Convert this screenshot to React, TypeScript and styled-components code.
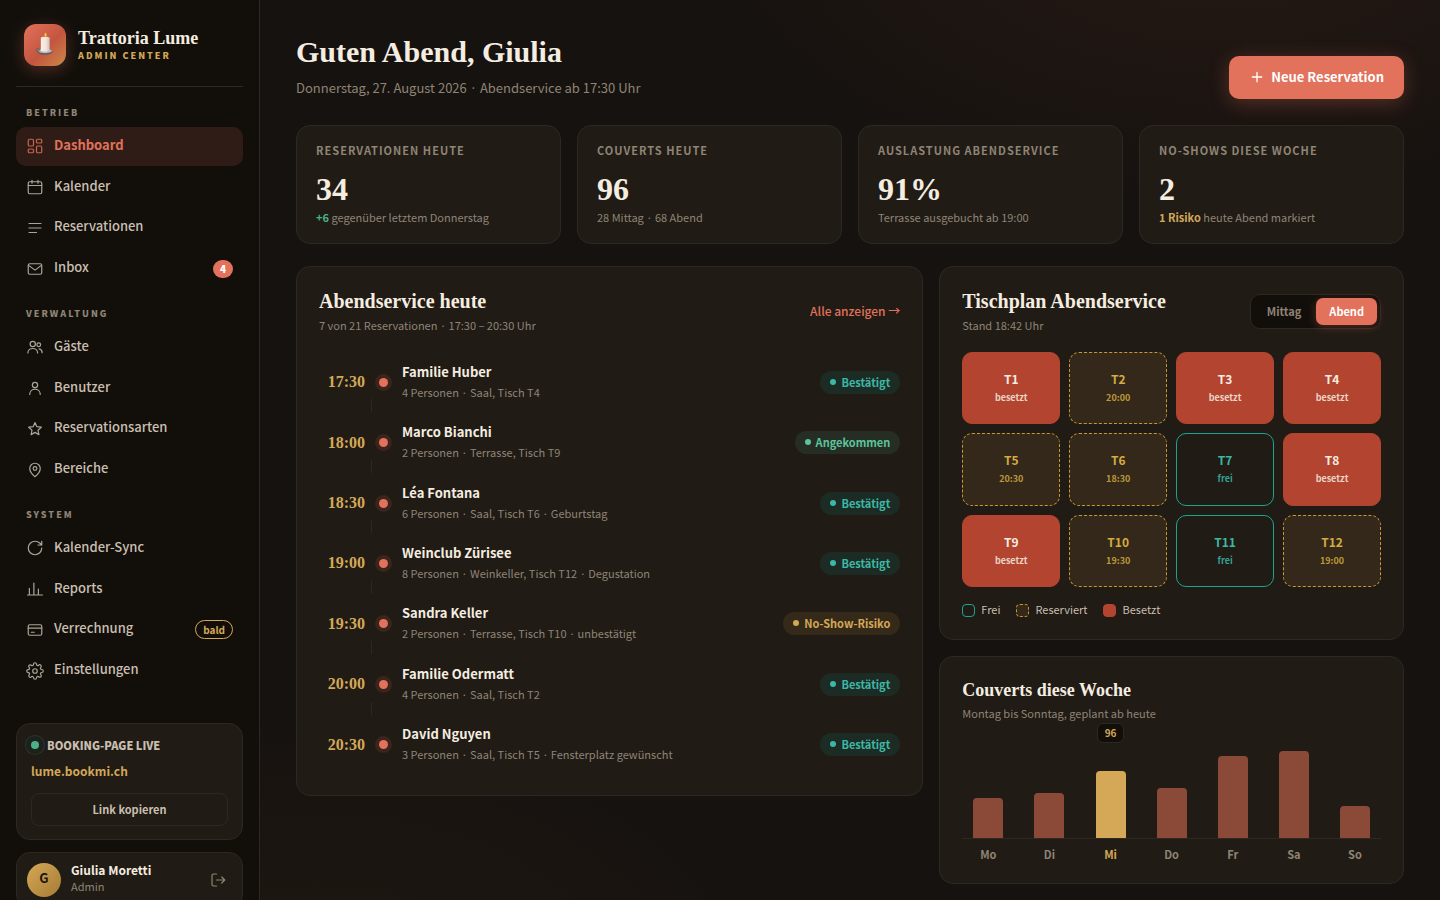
import React from "react";
import styled, { createGlobalStyle, css } from "styled-components";

const c = {
  bg: "#16120f",
  side: "#120f0b",
  card: "#201b15",
  line: "#2f2822",
  cream: "#f5ede0",
  soft: "#c9bfb0",
  muted: "#8f8475",
  coral: "#e2725b",
  gold: "#d4a857",
  teal: "#3cb8a6",
  green: "#5cc49a",
  brick: "#b34430",
};

const Global = createGlobalStyle`
  *, *::before, *::after { box-sizing: border-box; }
  body {
    margin: 0;
    min-height: 100vh;
    color: ${c.cream};
    font: 400 13px/20px "Noto Sans CJK JP", "Noto Sans", sans-serif;
    background:
      radial-gradient(ellipse 900px 500px at 85% -10%, rgba(226, 114, 91, 0.08), transparent 60%),
      radial-gradient(ellipse 800px 500px at 22% 112%, rgba(212, 140, 87, 0.05), transparent 60%),
      ${c.bg};
  }
  h1, h2, p, ul, ol { margin: 0; padding: 0; }
  ul, ol { list-style: none; }
  a { color: inherit; text-decoration: none; }
  button { font: inherit; color: inherit; border: 0; background: none; cursor: pointer; }
`;

const serif = css`
  font-family: "Liberation Serif", "Times New Roman", serif;
  font-weight: 700;
`;

const Shell = styled.div`
  display: grid;
  grid-template-columns: 260px minmax(0, 1fr);
  height: 100vh;
`;

/* Sidebar */

const Sidebar = styled.aside`
  display: flex;
  flex-direction: column;
  padding: 24px 16px;
  overflow: hidden;
  background: ${c.side};
  border-right: 1px solid ${c.line};
`;

const Brand = styled.div`
  display: flex;
  flex-shrink: 0;
  align-items: center;
  gap: 12px;
  padding: 0 8px 20px;
  border-bottom: 1px solid ${c.line};
`;

const Logo = styled.span`
  display: grid;
  place-items: center;
  width: 42px;
  height: 42px;
  padding-bottom: 2px;
  border-radius: 12px;
  background: linear-gradient(135deg, #e2725b 0%, #c4553f 55%, #c98a4a 100%);
  box-shadow: 0 4px 16px rgba(226, 114, 91, 0.3);
`;

const BrandName = styled.div`
  ${serif}
  font-size: 18px;
  line-height: 22px;
`;

const BrandSub = styled.div`
  color: ${c.gold};
  font-size: 9px;
  font-weight: 900;
  line-height: 14px;
  letter-spacing: 2px;
  text-transform: uppercase;
`;

const NavLabel = styled.h2`
  margin: 19px 10px 7px;
  color: ${c.muted};
  font-size: 9px;
  font-weight: 900;
  line-height: 14px;
  letter-spacing: 2px;
  text-transform: uppercase;
`;

const NavList = styled.ul`
  display: grid;
  grid-auto-rows: 1fr;
  gap: 2px;
  min-height: 161px;
`;

const NavLink = styled.a<{ $active?: boolean }>`
  display: flex;
  align-items: center;
  gap: 10px;
  height: 100%;
  padding: 0 10px;
  border-radius: 10px;
  color: ${(p) => (p.$active ? c.coral : c.soft)};
  background: ${(p) => (p.$active ? "#301c17" : "transparent")};
  font-weight: ${(p) => (p.$active ? 700 : 500)};
  svg { opacity: 0.85; }
`;

const NavText = styled.span`
  flex: 1;
  padding-bottom: 3px;
`;

const Count = styled.span`
  min-width: 20px;
  border-radius: 9px;
  background: ${c.coral};
  color: #fff;
  font-size: 10px;
  font-weight: 900;
  line-height: 18px;
  text-align: center;
`;

const Soon = styled.span`
  padding: 0 7px;
  border: 1px solid ${c.gold};
  border-radius: 10px;
  color: ${c.gold};
  font-size: 10px;
  font-weight: 700;
  line-height: 17px;
`;

const LiveCard = styled.section`
  flex-shrink: 0;
  margin-top: 33px;
  padding: 12px 14px 13px;
  border: 1px solid ${c.line};
  border-radius: 14px;
  background: ${c.card};
`;

const LiveHead = styled.div`
  display: flex;
  align-items: center;
  gap: 8px;
  color: ${c.soft};
  font-size: 11px;
  font-weight: 900;
  line-height: 18px;
  text-transform: uppercase;
`;

const LiveDot = styled.span`
  width: 8px;
  height: 8px;
  border-radius: 50%;
  background: #4caf8a;
  box-shadow: 0 0 0 5px #1c211b, 0 0 0 6px #25352c;
`;

const LiveUrl = styled.a`
  display: block;
  margin: 8px 0 13px;
  color: ${c.gold};
  font-size: 12px;
  font-weight: 600;
  line-height: 18px;
`;

const GhostButton = styled.button`
  display: block;
  width: 100%;
  height: 33px;
  padding: 0 0 2px;
  border: 1px solid ${c.line};
  border-radius: 8px;
  color: ${c.soft};
  font-size: 11px;
  font-weight: 600;
`;

const UserCard = styled.section`
  display: flex;
  flex-shrink: 0;
  align-items: center;
  gap: 10px;
  margin-top: 12px;
  padding: 10px;
  border: 1px solid ${c.line};
  border-radius: 14px;
  background: ${c.card};
`;

const Avatar = styled.span`
  width: 34px;
  height: 34px;
  border-radius: 50%;
  background: linear-gradient(135deg, #d4a857, #a67c34);
  color: #1a1510;
  font-weight: 700;
  line-height: 30px;
  text-align: center;
`;

const UserText = styled.div`
  flex: 1;
  margin: -4px 0 0;
  font-size: 12px;
  font-weight: 600;
  line-height: 17px;
`;

const UserRole = styled.div`
  color: ${c.muted};
  font-size: 11px;
  font-weight: 400;
`;

const IconButton = styled.button`
  display: flex;
  padding: 5px;
  color: ${c.muted};
`;

/* Main area */

const Main = styled.main`
  padding: 32px 36px 16px;
  overflow: hidden;
`;

const Header = styled.header`
  display: flex;
  align-items: flex-end;
  justify-content: space-between;
`;

const Title = styled.h1`
  ${serif}
  font-size: 30px;
  line-height: 40px;
`;

const Lead = styled.p`
  margin-top: 5px;
  color: ${c.muted};
  line-height: 22px;
`;

const PrimaryButton = styled.button`
  display: flex;
  align-items: center;
  gap: 6px;
  height: 43px;
  padding: 0 20px 1px;
  border-radius: 10px;
  background: ${c.coral};
  color: #fff;
  font-weight: 700;
  box-shadow: 0 4px 20px rgba(226, 114, 91, 0.3);
`;

const Stats = styled.div`
  display: grid;
  grid-template-columns: repeat(4, minmax(0, 1fr));
  gap: 16px;
  margin-top: 26px;
`;

const Card = styled.section`
  border: 1px solid ${c.line};
  border-radius: 14px;
  background: ${c.card};
`;

const StatCard = styled(Card)`
  padding: 16px 19px 17px;
`;

const StatLabel = styled.h2`
  color: ${c.muted};
  font-size: 11px;
  font-weight: 700;
  line-height: 16px;
  letter-spacing: 1px;
  text-transform: uppercase;
`;

const StatValue = styled.p`
  ${serif}
  margin: 13px 0 1px;
  font-size: 32px;
  line-height: 36px;
`;

const StatNote = styled.p`
  color: ${c.muted};
  font-size: 11px;
  line-height: 18px;
`;

const Accent = styled.strong<{ $color: string }>`
  color: ${(p) => p.$color};
  font-weight: 700;
`;

const Columns = styled.div`
  display: grid;
  grid-template-columns: minmax(0, 135fr) minmax(0, 100fr);
  align-items: start;
  gap: 16px;
  margin-top: 22px;
`;

const Stack = styled.div`
  display: grid;
  gap: 16px;
`;

const Panel = styled(Card)`
  padding: 22px 22px 20px;
`;

const PanelHead = styled.div`
  display: flex;
  align-items: center;
  justify-content: space-between;
  margin-bottom: 18px;
`;

const PanelTitle = styled.h2<{ $small?: boolean }>`
  ${serif}
  font-size: ${(p) => (p.$small ? 18 : 20)}px;
  line-height: ${(p) => (p.$small ? 22 : 24)}px;
`;

const PanelSub = styled.p`
  margin-top: 3px;
  color: ${c.muted};
  font-size: 11px;
  line-height: 18px;
`;

const MoreLink = styled.a`
  padding-bottom: 2px;
  color: ${c.coral};
  font-size: 12px;
  font-weight: 500;
`;

/* Evening service list */

const Timeline = styled.ol`
  display: grid;
  grid-auto-rows: 1fr;
  min-height: 423px;
`;

const Entry = styled.li`
  position: relative;
  display: flex;
  align-items: center;
  gap: 14px;
  &:not(:last-child)::after {
    content: "";
    position: absolute;
    left: 52px;
    bottom: 0;
    width: 1px;
    height: 13px;
    background: ${c.line};
  }
`;

const Time = styled.time`
  ${serif}
  width: 46px;
  color: ${c.gold};
  font-size: 16px;
  text-align: right;
`;

const Node = styled.span`
  width: 9px;
  height: 9px;
  border-radius: 50%;
  background: ${c.coral};
  box-shadow: 0 0 0 4px #3a241c;
`;

const Guest = styled.div`
  flex: 1;
  padding-bottom: 1px;
  font-weight: 600;
`;

const GuestNote = styled.p`
  color: ${c.muted};
  font-size: 11px;
  font-weight: 400;
`;

const tones = {
  ok: { fg: c.teal, bg: "#1d2b25" },
  here: { fg: c.green, bg: "#262d25" },
  risk: { fg: c.gold, bg: "#352a1a" },
};
type Tone = keyof typeof tones;

const Pill = styled.span<{ $tone: Tone }>`
  display: flex;
  align-items: center;
  gap: 5px;
  height: 23px;
  padding: 0 10px 1px;
  border-radius: 12px;
  color: ${(p) => tones[p.$tone].fg};
  background: ${(p) => tones[p.$tone].bg};
  font-size: 11px;
  font-weight: 700;
  &::before {
    content: "";
    width: 6px;
    height: 6px;
    border-radius: 50%;
    background: currentColor;
  }
`;

/* Table plan */

const Segmented = styled.div`
  display: flex;
  gap: 2px;
  padding: 3px;
  border: 1px solid ${c.line};
  border-radius: 10px;
  background: ${c.side};
`;

const Segment = styled.button<{ $on?: boolean }>`
  height: 27px;
  padding: 0 13px 1px;
  border-radius: 7px;
  font-size: 11px;
  font-weight: 700;
  color: ${(p) => (p.$on ? "#fff" : c.muted)};
  background: ${(p) => (p.$on ? c.coral : "transparent")};
  box-shadow: ${(p) => (p.$on ? "0 2px 10px rgba(226, 114, 91, 0.3)" : "none")};
`;

const seats = {
  free: css`
    color: ${c.teal};
    border: 1px solid #1fa391;
  `,
  held: css`
    color: #d4ac42;
    background: #332819;
    border: 1px dashed #c9972f;
  `,
  taken: css`
    color: ${c.cream};
    background: ${c.brick};
    border: 1px solid ${c.brick};
  `,
};
type Seat = keyof typeof seats;

const Plan = styled.div`
  display: grid;
  grid-template-columns: repeat(4, minmax(0, 1fr));
  grid-auto-rows: 1fr;
  gap: 9px;
  min-height: 235px;
`;

const TableTile = styled.button<{ $seat: Seat }>`
  display: flex;
  flex-direction: column;
  align-items: center;
  justify-content: center;
  gap: 2px;
  padding: 0;
  border-radius: 10px;
  font-size: 12px;
  font-weight: 700;
  line-height: 18px;
  ${(p) => seats[p.$seat]}
`;

const TileNote = styled.span`
  font-size: 9px;
  line-height: 16px;
  opacity: 0.85;
`;

const Legend = styled.ul`
  display: flex;
  gap: 16px;
  margin: 13px 0 1px;
  color: ${c.soft};
  font-size: 11px;
  line-height: 18px;
`;

const LegendItem = styled.li`
  display: flex;
  align-items: center;
  gap: 6px;
`;

const Swatch = styled.span<{ $seat: Seat }>`
  width: 13px;
  height: 13px;
  margin-top: 3px;
  border-radius: 4px;
  ${(p) => seats[p.$seat]}
`;

/* Weekly chart */

const Chart = styled.div`
  display: grid;
  grid-template-columns: repeat(7, minmax(0, 1fr));
  gap: 0 9px;
  height: 101px;
  margin-top: 16px;
  border-bottom: 1px solid ${c.line};
`;

const ChartColumn = styled.div`
  position: relative;
  display: flex;
  align-items: flex-end;
  justify-content: center;
`;

const Bar = styled.span<{ $on?: boolean }>`
  width: 30px;
  border-radius: 4px 4px 0 0;
  background: ${(p) => (p.$on ? c.gold : "#8b4a38")};
`;

const BarTip = styled.span`
  position: absolute;
  top: -15px;
  padding: 0 7px;
  border: 1px solid ${c.line};
  border-radius: 6px;
  background: ${c.side};
  color: ${c.gold};
  font-size: 10px;
  font-weight: 700;
  line-height: 18px;
`;

const Days = styled.div`
  display: grid;
  grid-template-columns: repeat(7, minmax(0, 1fr));
  gap: 0 9px;
  margin-top: 6px;
  text-align: center;
`;

const Day = styled.span<{ $on?: boolean }>`
  color: ${(p) => (p.$on ? c.gold : c.muted)};
  font-size: 11px;
  font-weight: 600;
  line-height: 18px;
`;

/* Icons */

const paths = {
  dashboard: (
    <>
      <rect x="3" y="3" width="7" height="9" rx="1.5" />
      <rect x="14" y="3" width="7" height="5" rx="1.5" />
      <rect x="14" y="12" width="7" height="9" rx="1.5" />
      <rect x="3" y="16" width="7" height="5" rx="1.5" />
    </>
  ),
  calendar: (
    <>
      <rect x="3" y="5" width="18" height="16" rx="2" />
      <path d="M3 10h18M8 3v4M16 3v4" />
    </>
  ),
  list: <path d="M4 6h16M4 12h16M4 18h10" />,
  mail: (
    <>
      <rect x="3" y="5" width="18" height="14" rx="2" />
      <path d="M4 7.5l8 6 8-6" />
    </>
  ),
  guests: (
    <>
      <circle cx="9" cy="8" r="3.5" />
      <path d="M2.5 20c0-3.6 2.9-6 6.5-6s6.5 2.4 6.5 6" />
      <circle cx="17" cy="9" r="2.5" />
      <path d="M17.5 14.5c2.4.4 4 2.4 4 5" />
    </>
  ),
  user: (
    <>
      <circle cx="12" cy="8" r="3.5" />
      <path d="M5 20.5c0-4 3.1-7 7-7s7 3 7 7" />
    </>
  ),
  star: <path d="M12 3.5l2.5 5.4 5.9.7-4.4 4 1.2 5.9-5.2-3-5.2 3 1.2-5.9-4.4-4 5.9-.7z" />,
  pin: (
    <>
      <path d="M12 21s-7-5.7-7-11a7 7 0 0 1 14 0c0 5.3-7 11-7 11z" />
      <circle cx="12" cy="10" r="2.5" />
    </>
  ),
  sync: <path d="M21 12a9 9 0 1 1-9-9c2.52 0 4.93 1 6.74 2.74L21 8M21 3v5h-5" />,
  reports: <path d="M2 20h20M4.5 20v-9M10.5 20V4M16.5 20v-8" />,
  billing: (
    <>
      <rect x="3" y="5" width="18" height="14" rx="2" />
      <path d="M3 9.5h18M7 15h4" />
    </>
  ),
  settings: (
    <>
      <circle cx="12" cy="12" r="3" />
      <path d="M19.4 15a1.65 1.65 0 0 0 .33 1.82l.06.06a2 2 0 0 1 0 2.83 2 2 0 0 1-2.83 0l-.06-.06a1.65 1.65 0 0 0-1.82-.33 1.65 1.65 0 0 0-1 1.51V21a2 2 0 0 1-2 2 2 2 0 0 1-2-2v-.09A1.65 1.65 0 0 0 9 19.4a1.65 1.65 0 0 0-1.82.33l-.06.06a2 2 0 0 1-2.83 0 2 2 0 0 1 0-2.83l.06-.06a1.65 1.65 0 0 0 .33-1.82 1.65 1.65 0 0 0-1.51-1H3a2 2 0 0 1-2-2 2 2 0 0 1 2-2h.09A1.65 1.65 0 0 0 4.6 9a1.65 1.65 0 0 0-.33-1.82l-.06-.06a2 2 0 0 1 0-2.83 2 2 0 0 1 2.83 0l.06.06a1.65 1.65 0 0 0 1.82.33H9a1.65 1.65 0 0 0 1-1.51V3a2 2 0 0 1 2-2 2 2 0 0 1 2 2v.09a1.65 1.65 0 0 0 1 1.51 1.65 1.65 0 0 0 1.82-.33l.06-.06a2 2 0 0 1 2.83 0 2 2 0 0 1 0 2.83l-.06.06a1.65 1.65 0 0 0-.33 1.82V9a1.65 1.65 0 0 0 1.51 1H21a2 2 0 0 1 2 2 2 2 0 0 1-2 2h-.09a1.65 1.65 0 0 0-1.51 1z" />
    </>
  ),
  logout: <path d="M10 4H6a2 2 0 0 0-2 2v12a2 2 0 0 0 2 2h4M17 8l4 4-4 4M10 12h11" />,
  plus: <path d="M12 5v14M5 12h14" />,
};
type IconName = keyof typeof paths;

const Icon = ({ name, size = 18, weight = 1.6 }: { name: IconName; size?: number; weight?: number }) => (
  <svg
    width={size}
    height={size}
    viewBox="0 0 24 24"
    fill="none"
    stroke="currentColor"
    strokeWidth={weight}
    strokeLinecap="round"
    strokeLinejoin="round"
    aria-hidden="true"
  >
    {paths[name]}
  </svg>
);

const Candle = () => (
  <svg width="21" height="25" viewBox="0 0 20 24" aria-hidden="true">
    <defs>
      <linearGradient id="wax" x1="0" x2="1">
        <stop offset="0" stopColor="#f7f1e6" />
        <stop offset="0.6" stopColor="#f3e4da" />
        <stop offset="1" stopColor="#cdbdb5" />
      </linearGradient>
    </defs>
    <ellipse cx="9.5" cy="19" rx="7.5" ry="2.8" fill="#5d5a5c" />
    <ellipse cx="9.5" cy="18.3" rx="6.8" ry="2.1" fill="#b9b6b8" />
    <circle cx="2.5" cy="17.3" r="1.5" fill="none" stroke="#6b686a" />
    <path d="M5.5 5.5q2-1.5 4-.6 2.5-.9 4.5.6V18q-4.2 2-8.500 0z" fill="url(#wax)" />
    <path d="M10 .5q2.200 2.600 0 4.500-2.200-1.900 0-4.500z" fill="#ffc23d" />
  </svg>
);

/* Data */

type NavEntry = { icon: IconName; text: string; active?: boolean; count?: number; soon?: boolean };
const nav: { label: string; items: NavEntry[] }[] = [
  {
    label: "Betrieb",
    items: [
      { icon: "dashboard", text: "Dashboard", active: true },
      { icon: "calendar", text: "Kalender" },
      { icon: "list", text: "Reservationen" },
      { icon: "mail", text: "Inbox", count: 4 },
    ],
  },
  {
    label: "Verwaltung",
    items: [
      { icon: "guests", text: "Gäste" },
      { icon: "user", text: "Benutzer" },
      { icon: "star", text: "Reservationsarten" },
      { icon: "pin", text: "Bereiche" },
    ],
  },
  {
    label: "System",
    items: [
      { icon: "sync", text: "Kalender-Sync" },
      { icon: "reports", text: "Reports" },
      { icon: "billing", text: "Verrechnung", soon: true },
      { icon: "settings", text: "Einstellungen" },
    ],
  },
];

const stats = [
  { label: "Reservationen heute", value: "34", mark: "+6", color: "#4caf8a", note: " gegenüber letztem Donnerstag" },
  { label: "Couverts heute", value: "96", note: "28 Mittag · 68 Abend" },
  { label: "Auslastung Abendservice", value: "91%", note: "Terrasse ausgebucht ab 19:00" },
  { label: "No-Shows diese Woche", value: "2", mark: "1 Risiko", color: c.gold, note: " heute Abend markiert" },
];

const bookings: { time: string; name: string; note: string; tone: Tone; status: string }[] = [
  { time: "17:30", name: "Familie Huber", note: "4 Personen · Saal, Tisch T4", tone: "ok", status: "Bestätigt" },
  { time: "18:00", name: "Marco Bianchi", note: "2 Personen · Terrasse, Tisch T9", tone: "here", status: "Angekommen" },
  { time: "18:30", name: "Léa Fontana", note: "6 Personen · Saal, Tisch T6 · Geburtstag", tone: "ok", status: "Bestätigt" },
  { time: "19:00", name: "Weinclub Zürisee", note: "8 Personen · Weinkeller, Tisch T12 · Degustation", tone: "ok", status: "Bestätigt" },
  { time: "19:30", name: "Sandra Keller", note: "2 Personen · Terrasse, Tisch T10 · unbestätigt", tone: "risk", status: "No-Show-Risiko" },
  { time: "20:00", name: "Familie Odermatt", note: "4 Personen · Saal, Tisch T2", tone: "ok", status: "Bestätigt" },
  { time: "20:30", name: "David Nguyen", note: "3 Personen · Saal, Tisch T5 · Fensterplatz gewünscht", tone: "ok", status: "Bestätigt" },
];

const tables: [Seat, string][] = [
  ["taken", "besetzt"],
  ["held", "20:00"],
  ["taken", "besetzt"],
  ["taken", "besetzt"],
  ["held", "20:30"],
  ["held", "18:30"],
  ["free", "frei"],
  ["taken", "besetzt"],
  ["taken", "besetzt"],
  ["held", "19:30"],
  ["free", "frei"],
  ["held", "19:00"],
];

const legend: [Seat, string][] = [
  ["free", "Frei"],
  ["held", "Reserviert"],
  ["taken", "Besetzt"],
];

const week = [
  { day: "Mo", height: 40 },
  { day: "Di", height: 45 },
  { day: "Mi", height: 67, tip: "96" },
  { day: "Do", height: 50 },
  { day: "Fr", height: 82 },
  { day: "Sa", height: 87 },
  { day: "So", height: 32 },
];

export default function App() {
  return (
    <Shell lang="de">
      <Global />
      <Sidebar>
        <Brand>
          <Logo>
            <Candle />
          </Logo>
          <div>
            <BrandName>Trattoria Lume</BrandName>
            <BrandSub>Admin Center</BrandSub>
          </div>
        </Brand>
        <nav aria-label="Hauptnavigation">
          {nav.map((group) => (
            <section key={group.label}>
              <NavLabel>{group.label}</NavLabel>
              <NavList>
                {group.items.map((item) => (
                  <li key={item.text}>
                    <NavLink href="#" $active={item.active} aria-current={item.active ? "page" : undefined}>
                      <Icon name={item.icon} />
                      <NavText>{item.text}</NavText>
                      {item.count && <Count>{item.count}</Count>}
                      {item.soon && <Soon>bald</Soon>}
                    </NavLink>
                  </li>
                ))}
              </NavList>
            </section>
          ))}
        </nav>
        <LiveCard>
          <LiveHead>
            <LiveDot />
            Booking-Page live
          </LiveHead>
          <LiveUrl href="#">lume.bookmi.ch</LiveUrl>
          <GhostButton type="button">Link kopieren</GhostButton>
        </LiveCard>
        <UserCard>
          <Avatar>G</Avatar>
          <UserText>
            Giulia Moretti
            <UserRole>Admin</UserRole>
          </UserText>
          <IconButton type="button" aria-label="Abmelden">
            <Icon name="logout" />
          </IconButton>
        </UserCard>
      </Sidebar>

      <Main>
        <Header>
          <div>
            <Title>Guten Abend, Giulia</Title>
            <Lead>Donnerstag, 27. August 2026 · Abendservice ab 17:30 Uhr</Lead>
          </div>
          <PrimaryButton type="button">
            <Icon name="plus" size={16} weight={2} />
            Neue Reservation
          </PrimaryButton>
        </Header>

        <Stats>
          {stats.map((s) => (
            <StatCard key={s.label}>
              <StatLabel>{s.label}</StatLabel>
              <StatValue>{s.value}</StatValue>
              <StatNote>
                {s.mark && <Accent $color={s.color!}>{s.mark}</Accent>}
                {s.note}
              </StatNote>
            </StatCard>
          ))}
        </Stats>

        <Columns>
          <Panel>
            <PanelHead>
              <div>
                <PanelTitle>Abendservice heute</PanelTitle>
                <PanelSub>7 von 21 Reservationen · 17:30 – 20:30 Uhr</PanelSub>
              </div>
              <MoreLink href="#">Alle anzeigen →</MoreLink>
            </PanelHead>
            <Timeline>
              {bookings.map((b) => (
                <Entry key={b.time}>
                  <Time>{b.time}</Time>
                  <Node />
                  <Guest>
                    {b.name}
                    <GuestNote>{b.note}</GuestNote>
                  </Guest>
                  <Pill $tone={b.tone}>{b.status}</Pill>
                </Entry>
              ))}
            </Timeline>
          </Panel>

          <Stack>
            <Panel>
              <PanelHead>
                <div>
                  <PanelTitle>Tischplan Abendservice</PanelTitle>
                  <PanelSub>Stand 18:42 Uhr</PanelSub>
                </div>
                <Segmented>
                  <Segment type="button">Mittag</Segment>
                  <Segment type="button" $on>
                    Abend
                  </Segment>
                </Segmented>
              </PanelHead>
              <Plan>
                {tables.map(([seat, note], i) => (
                  <TableTile key={i} type="button" $seat={seat}>
                    T{i + 1}
                    <TileNote>{note}</TileNote>
                  </TableTile>
                ))}
              </Plan>
              <Legend>
                {legend.map(([seat, text]) => (
                  <LegendItem key={text}>
                    <Swatch $seat={seat} />
                    {text}
                  </LegendItem>
                ))}
              </Legend>
            </Panel>

            <Panel>
              <PanelTitle $small>Couverts diese Woche</PanelTitle>
              <PanelSub>Montag bis Sonntag, geplant ab heute</PanelSub>
              <Chart>
                {week.map((d) => (
                  <ChartColumn key={d.day}>
                    {d.tip && <BarTip>{d.tip}</BarTip>}
                    <Bar $on={!!d.tip} style={{ height: `${d.height}%` }} />
                  </ChartColumn>
                ))}
              </Chart>
              <Days>
                {week.map((d) => (
                  <Day key={d.day} $on={!!d.tip}>
                    {d.day}
                  </Day>
                ))}
              </Days>
            </Panel>
          </Stack>
        </Columns>
      </Main>
    </Shell>
  );
}
